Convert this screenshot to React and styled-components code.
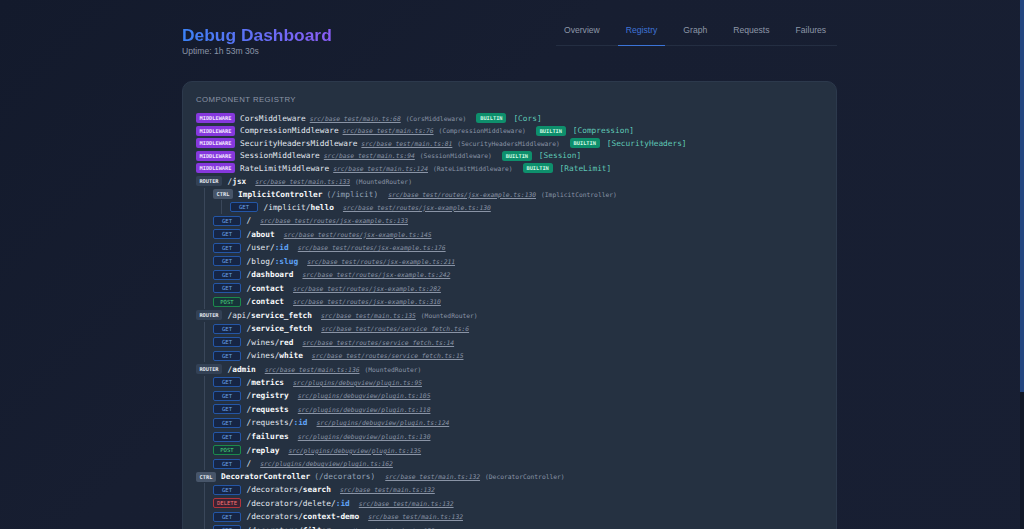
import React from 'react';
import styled, { createGlobalStyle } from 'styled-components';

const Global = createGlobalStyle`
  html { background: #171e30; }
  body { margin: 0; padding: 0; font-family: "Liberation Sans", Arial, sans-serif; }
`;

const tabs = ['Overview', 'Registry', 'Graph', 'Requests', 'Failures'];

const middlewares = [
  ['CorsMiddleware', 'src/base_test/main.ts:68', 'Cors'],
  ['CompressionMiddleware', 'src/base_test/main.ts:76', 'Compression'],
  ['SecurityHeadersMiddleware', 'src/base_test/main.ts:81', 'SecurityHeaders'],
  ['SessionMiddleware', 'src/base_test/main.ts:94', 'Session'],
  ['RateLimitMiddleware', 'src/base_test/main.ts:124', 'RateLimit'],
];

const jsxFile = 'src/base_test/routes/jsx-example.ts:';
const fetchFile = 'src/base_test/routes/service_fetch.ts:';
const pluginFile = 'src/plugins/debugview/plugin.ts:';
const mainFile = 'src/base_test/main.ts:132';

const Page = styled.div`
  height: 714px;
  box-sizing: border-box;
  padding: 18px 0 0 182px;
  background: linear-gradient(135deg, #131a2c 0%, #171e31 35%, #181f33 100%);
  overflow: hidden;
`;

// the scrollbar of the page, drawn over it
const ScrollTrack = styled.div`
  position: fixed;
  top: 0;
  right: 0;
  bottom: 0;
  width: 4px;
  background: #111827;
`;

const ScrollThumb = styled.div`
  height: 392px;
  background: #23457f;
`;

const Wrap = styled.div`
  width: 655px;
`;

const Header = styled.header`
  display: flex;
  justify-content: space-between;
  align-items: flex-start;
  margin-bottom: 25px;
`;

const Title = styled.h1`
  margin: 7px 0 0;
  font-size: 17.4px;
  line-height: 21px;
  font-weight: 700;
  background: linear-gradient(90deg, #3b82f6, #8b5cf6);
  -webkit-background-clip: text;
  background-clip: text;
  color: transparent;
`;

const Uptime = styled.div`
  font-size: 8.6px;
  line-height: 10px;
  color: #8b95a7;
`;

const Nav = styled.nav`
  display: flex;
  gap: 10px;
  width: 281px;
  height: 28px;
  box-sizing: border-box;
  border-bottom: 1px solid #242e42;
`;

const Tab = styled.a`
  height: 28px;
  box-sizing: border-box;
  padding: 7px 8px 0;
  font-size: 8.6px;
  line-height: 11px;
  color: ${(p) => (p.$active ? '#3f74d8' : '#8d97a8')};
  border-bottom: 1px solid ${(p) => (p.$active ? '#3b74d8' : 'transparent')};
`;

const Card = styled.section`
  box-sizing: border-box;
  height: 625px;
  padding: 13px;
  background: #253141;
  border: 1px solid #2c394c;
  border-radius: 10px;
`;

const CardTitle = styled.h2`
  margin: 0 0 7px;
  font-size: 7.8px;
  line-height: 10px;
  font-weight: 400;
  letter-spacing: 0.42px;
  text-transform: uppercase;
  color: #8b95a7;
`;

const Tree = styled.div`
  font-family: "DejaVu Sans Mono", "Liberation Mono", monospace;
  font-size: 7.8px;
  color: #e2e8f0;
`;

const Row = styled.div`
  display: flex;
  align-items: center;
  height: ${(p) => p.$h || 13.55}px;
  white-space: nowrap;
`;

const Nested = styled.div`
  margin-left: 8px;
  padding-left: 8px;
  border-left: 1px solid #3a475a;
`;

const Badge = styled.span`
  display: inline-flex;
  flex: none;
  justify-content: center;
  align-items: center;
  box-sizing: border-box;
  height: 10px;
  border-radius: 2px;
  font-size: 5.3px;
  font-weight: 700;
`;

const MiddlewareBadge = styled(Badge)`
  width: 39px;
  background: #8638dd;
  color: #f3e8ff;
  margin-right: 5px;
`;

const RouterBadge = styled(Badge)`
  width: 26px;
  background: #334155;
  color: #e2e8f0;
  margin-right: 5.5px;
`;

const CtrlBadge = styled(Badge)`
  width: 20px;
  background: #475569;
  color: #e2e8f0;
  margin-right: 5px;
`;

const methodColors = {
  GET: ['#2456a6', '#162544', '#6aa0e6'],
  POST: ['#1c8a4c', '#17343a', '#4ade80'],
  DELETE: ['#b3343c', '#3c2233', '#f87171'],
};

const Method = styled(Badge)`
  width: 28px;
  margin-right: 5.5px;
  font-size: 5.6px;
  font-weight: 400;
  border: 1px solid ${(p) => methodColors[p.$m][0]};
  background: ${(p) => methodColors[p.$m][1]};
  color: ${(p) => methodColors[p.$m][2]};
`;

const BuiltinBadge = styled(Badge)`
  width: 30px;
  margin-left: 10px;
  border-radius: 2.5px;
  background: #0e8f6c;
  color: #d1fae5;
`;

const Tag = styled.span`
  margin-left: 7px;
  color: #5fc8b6;
`;

const Path = styled.span`
  margin-right: 9px;
  color: #e2e8f0;
`;

const Strong = styled.b`
  color: #f8fafc;
`;

const Param = styled.b`
  color: #60a5fa;
`;

const Name = styled.span`
  margin-right: 4px;
  color: ${(p) => (p.$strong ? '#f8fafc' : '#e2e8f0')};
  font-weight: ${(p) => (p.$strong ? 700 : 400)};
`;

const Mount = styled.span`
  margin-right: 10px;
  color: #94a3b8;
`;

const Source = styled.a`
  font-size: 6.3px;
  font-style: italic;
  text-decoration: underline;
  color: #8a94a6;
`;

const Note = styled.span`
  margin-left: 5px;
  font-size: 6.3px;
  color: #8a94a6;
`;

const Route = ({ m = 'GET', pre, bold, param, src }) => (
  <Row>
    <Method $m={m}>{m}</Method>
    <Path>
      {pre}
      {bold && <Strong>{bold}</Strong>}
      {param && <Param>{param}</Param>}
    </Path>
    <Source>{src}</Source>
  </Row>
);

const Router = ({ pre, bold, src }) => (
  <Row $h={13.1}>
    <RouterBadge>ROUTER</RouterBadge>
    <Path>
      {pre}
      <Strong>{bold}</Strong>
    </Path>
    <Source>{src}</Source>
    <Note>(MountedRouter)</Note>
  </Row>
);

const Controller = ({ name, mount, src }) => (
  <Row $h={12.55}>
    <CtrlBadge>CTRL</CtrlBadge>
    <Name $strong>{name}</Name>
    <Mount>({mount})</Mount>
    <Source>{src}</Source>
    <Note>({name})</Note>
  </Row>
);

export default function App() {
  return (
    <Page>
      <Global />
      <ScrollTrack>
        <ScrollThumb />
      </ScrollTrack>
      <Wrap>
        <Header>
          <div>
            <Title>Debug Dashboard</Title>
            <Uptime>Uptime: 1h 53m 30s</Uptime>
          </div>
          <Nav>
            {tabs.map((t) => (
              <Tab key={t} $active={t === 'Registry'}>{t}</Tab>
            ))}
          </Nav>
        </Header>
        <Card>
          <CardTitle>Component Registry</CardTitle>
          <Tree>
            {middlewares.map(([name, src, tag]) => (
              <Row $h={12.55} key={name}>
                <MiddlewareBadge>MIDDLEWARE</MiddlewareBadge>
                <Name>{name}</Name>
                <Source>{src}</Source>
                <Note>({name})</Note>
                <BuiltinBadge>BUILTIN</BuiltinBadge>
                <Tag>[{tag}]</Tag>
              </Row>
            ))}
            <Router pre="/" bold="jsx" src="src/base_test/main.ts:133" />
            <Nested>
              <Controller name="ImplicitController" mount="/implicit" src={jsxFile + '130'} />
              <Nested>
                <Route pre="/implicit/" bold="hello" src={jsxFile + '130'} />
              </Nested>
              <Route pre="/" src={jsxFile + '133'} />
              <Route pre="/" bold="about" src={jsxFile + '145'} />
              <Route pre="/user/" param=":id" src={jsxFile + '176'} />
              <Route pre="/blog/" param=":slug" src={jsxFile + '211'} />
              <Route pre="/" bold="dashboard" src={jsxFile + '242'} />
              <Route pre="/" bold="contact" src={jsxFile + '282'} />
              <Route m="POST" pre="/" bold="contact" src={jsxFile + '310'} />
            </Nested>
            <Router pre="/api/" bold="service_fetch" src="src/base_test/main.ts:135" />
            <Nested>
              <Route pre="/" bold="service_fetch" src={fetchFile + '6'} />
              <Route pre="/wines/" bold="red" src={fetchFile + '14'} />
              <Route pre="/wines/" bold="white" src={fetchFile + '15'} />
            </Nested>
            <Router pre="/" bold="admin" src="src/base_test/main.ts:136" />
            <Nested>
              <Route pre="/" bold="metrics" src={pluginFile + '95'} />
              <Route pre="/" bold="registry" src={pluginFile + '105'} />
              <Route pre="/" bold="requests" src={pluginFile + '118'} />
              <Route pre="/requests/" param=":id" src={pluginFile + '124'} />
              <Route pre="/" bold="failures" src={pluginFile + '130'} />
              <Route m="POST" pre="/" bold="replay" src={pluginFile + '135'} />
              <Route pre="/" src={pluginFile + '162'} />
            </Nested>
            <Controller name="DecoratorController" mount="/decorators" src={mainFile} />
            <Nested>
              <Route pre="/decorators/" bold="search" src={mainFile} />
              <Route m="DELETE" pre="/decorators/delete/" param=":id" src={mainFile} />
              <Route pre="/decorators/" bold="context-demo" src={mainFile} />
              <Route pre="/decorators/" bold="filter" src={mainFile} />
            </Nested>
          </Tree>
        </Card>
      </Wrap>
    </Page>
  );
}
